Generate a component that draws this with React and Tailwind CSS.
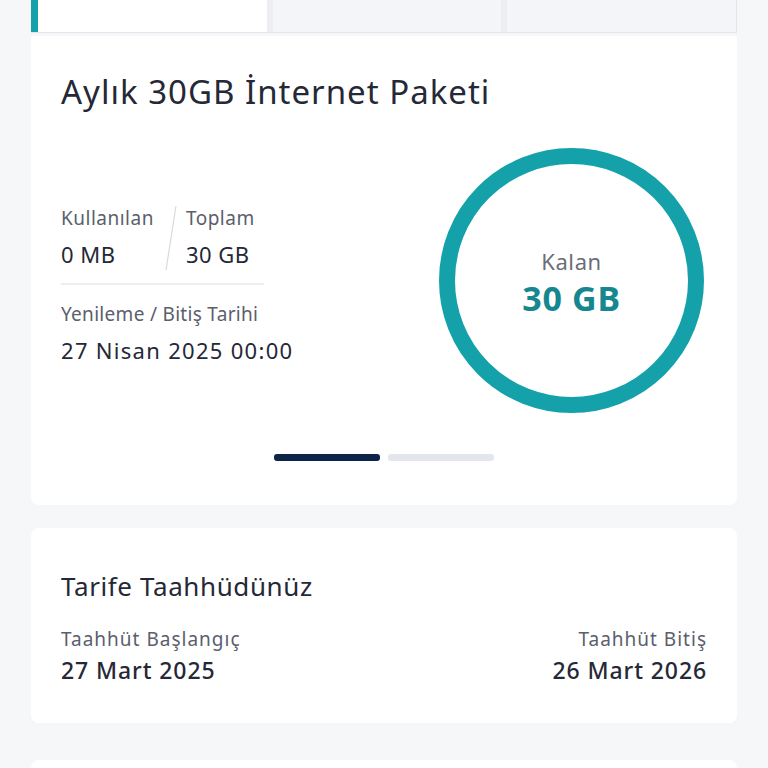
import React from "react";

export default function App() {
  const font = { fontFamily: "'Noto Sans', Lato, sans-serif" };
  return (
    <div className="min-h-[768px] w-[768px] bg-[#f6f7f9] px-[31px]" style={font}>
      {/* tabs */}
      <div className="flex h-[33px] gap-[6px] border-b border-[#e3e5ea] bg-[#eceef2]">
        <div className="flex-1 bg-white border-l-[7px] border-[#16a2ab]"></div>
        <div className="flex-1 bg-[#f4f5f9]"></div>
        <div className="flex-1 bg-[#f4f5f9] border-r border-[#e3e5ea]"></div>
      </div>

      {/* package card */}
      <div className="mt-[3px] rounded-b-[8px] rounded-t-[2px] bg-white px-[30px] pt-[34px] pb-[44px]">
        <h1 className="text-[33px] leading-[44px] text-[#252836] tracking-[1px]">Aylık 30GB İnternet Paketi</h1>
        <div className="mt-[34px] flex items-center justify-between">
          <div className="w-[203px] pt-[8px]">
            <div className="flex items-stretch">
              <div className="flex flex-col">
                <span className="text-[19px] leading-[26px] tracking-[0.5px] text-[#5b5e6c]">Kullanılan</span>
                <span className="mt-[8px] text-[22px] leading-[30px] tracking-[0.5px] text-[#252836]">0 MB</span>
              </div>
              <div className="relative mx-[11px] w-[10px]">
                <svg width="12" height="66" viewBox="0 0 12 66" className="absolute left-0 top-[0px]">
                  <line x1="11" y1="1" x2="1" y2="65" stroke="#d8dae0" strokeWidth="1.2" />
                </svg>
              </div>
              <div className="flex flex-col">
                <span className="text-[19px] leading-[26px] tracking-[0.5px] text-[#5b5e6c]">Toplam</span>
                <span className="mt-[8px] text-[22px] leading-[30px] tracking-[0.5px] text-[#252836]">30 GB</span>
              </div>
            </div>
            <div className="mt-[14px] h-[2px] w-[203px] bg-[#eceef2]"></div>
            <div className="mt-[16px] text-[19px] leading-[26px] tracking-[0.3px] text-[#5b5e6c] whitespace-nowrap">Yenileme / Bitiş Tarihi</div>
            <div className="mt-[8px] text-[22px] leading-[30px] tracking-[1.3px] text-[#252836] whitespace-nowrap">27 Nisan 2025 00:00</div>
          </div>
          <div className="relative mr-[3px] h-[265px] w-[265px]">
            <svg width="265" height="265" viewBox="0 0 265 265" className="absolute inset-0">
              <circle cx="132.5" cy="132.5" r="124.5" fill="none" stroke="#14a1a9" strokeWidth="16" />
            </svg>
            <div className="absolute inset-0 flex flex-col items-center justify-center pt-[2px]">
              <span className="text-[22px] leading-[28px] tracking-[0.6px] text-[#6b6d78]">Kalan</span>
              <span className="mt-[4px] text-[34px] leading-[38px] tracking-[0.7px] font-bold text-[#17878f]">30 GB</span>
            </div>
          </div>
        </div>
        <div className="mt-[41px] flex justify-center gap-[8px]">
          <div className="h-[7px] w-[106px] rounded-[3px] bg-[#0d2548]"></div>
          <div className="h-[7px] w-[106px] rounded-[3px] bg-[#e4e6ee]"></div>
        </div>
      </div>

      {/* commitment card */}
      <div className="mt-[23px] rounded-[8px] bg-white px-[30px] pt-[40px] pb-[38px]">
        <h2 className="text-[26px] leading-[36px] tracking-[0.6px] text-[#252836]">Tarife Taahhüdünüz</h2>
        <div className="mt-[22px] flex justify-between">
          <div className="flex flex-col">
            <span className="text-[19px] leading-[26px] tracking-[1px] text-[#5b5e6c]">Taahhüt Başlangıç</span>
            <span className="mt-[3px] text-[23px] leading-[30px] tracking-[0.9px] font-medium text-[#252836]">27 Mart 2025</span>
          </div>
          <div className="flex flex-col items-end">
            <span className="text-[19px] leading-[26px] tracking-[1px] text-[#5b5e6c]">Taahhüt Bitiş</span>
            <span className="mt-[3px] text-[23px] leading-[30px] tracking-[0.9px] font-medium text-[#252836]">26 Mart 2026</span>
          </div>
        </div>
      </div>

      <div className="mt-[37px] h-[40px] rounded-t-[8px] bg-white"></div>
    </div>
  );
}
